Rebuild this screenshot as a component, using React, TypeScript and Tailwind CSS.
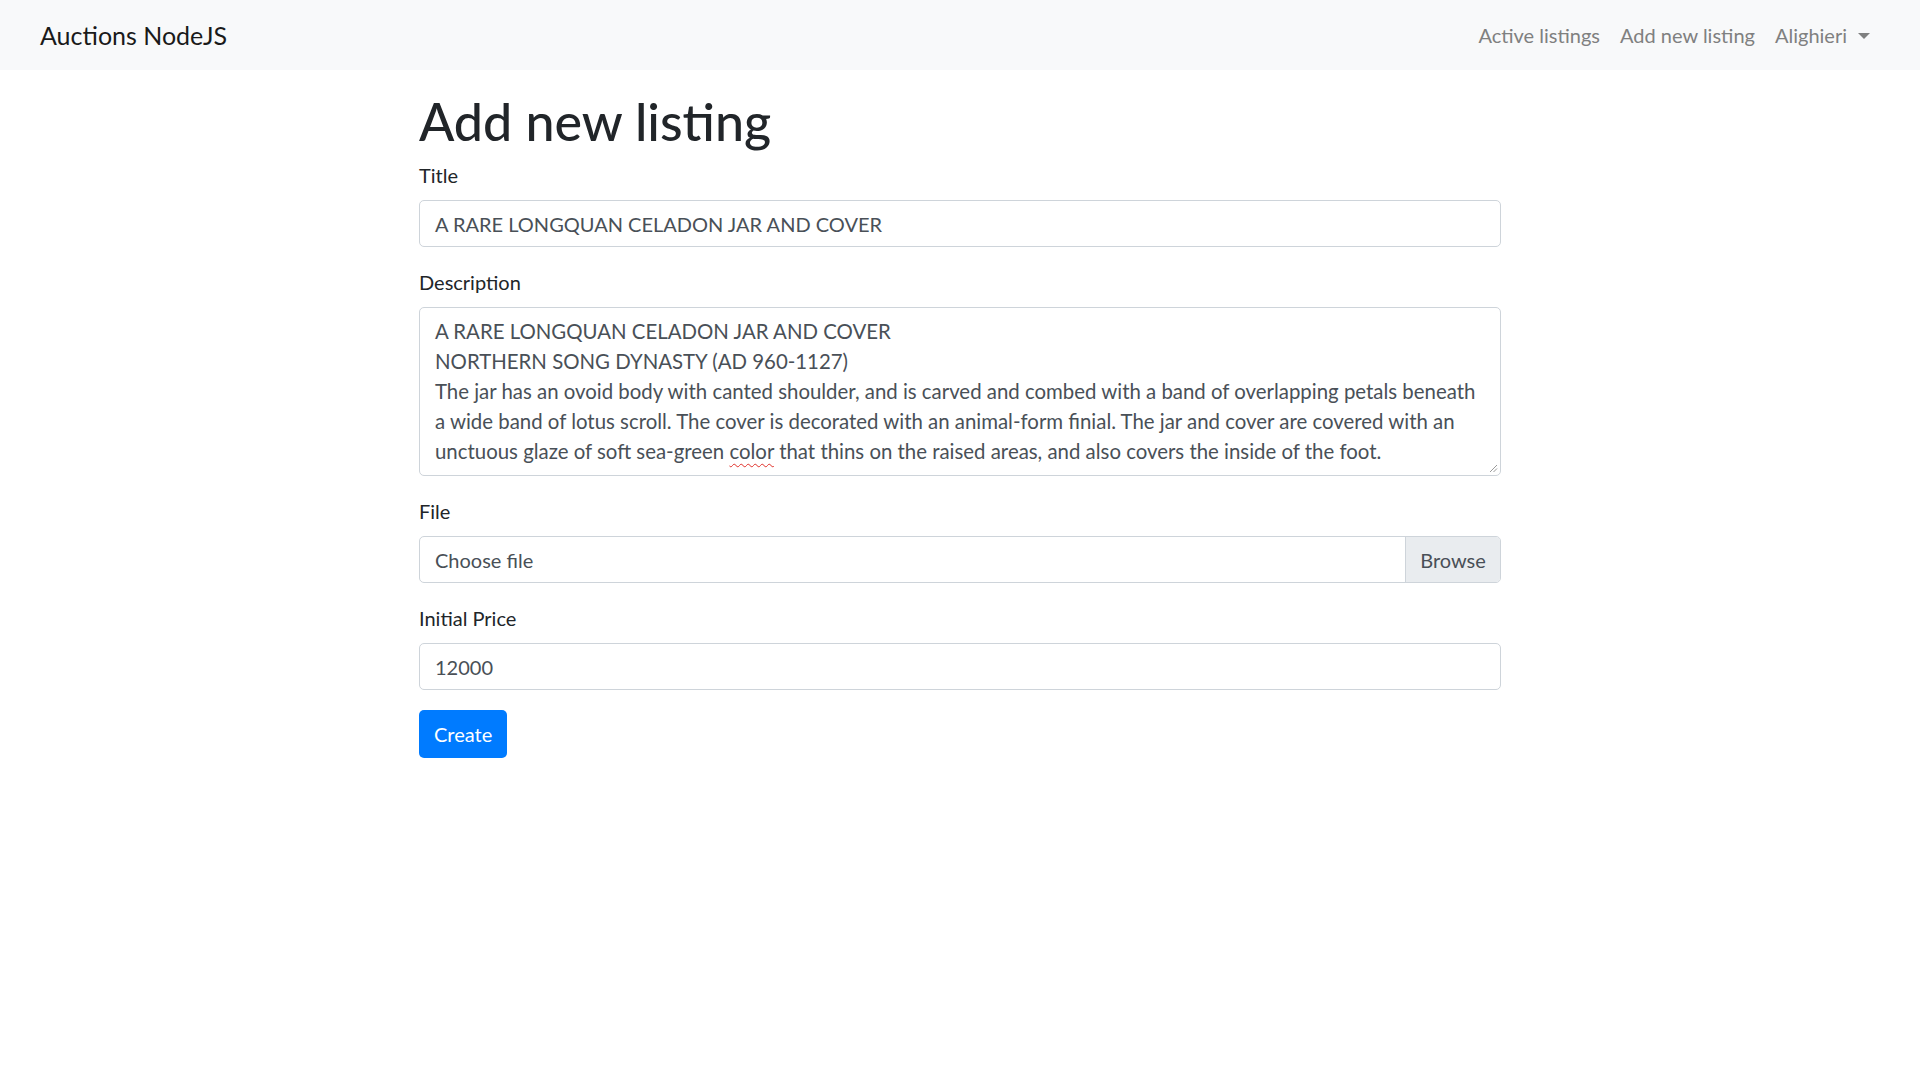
import React from "react";

const font = { fontFamily: "Lato, 'Noto Sans', sans-serif" };

const descLines: React.ReactNode[] = [
  "A RARE LONGQUAN CELADON JAR AND COVER",
  "NORTHERN SONG DYNASTY (AD 960-1127)",
  "The jar has an ovoid body with canted shoulder, and is carved and combed with a band of overlapping petals beneath",
  "a wide band of lotus scroll. The cover is decorated with an animal-form finial. The jar and cover are covered with an",
  <>
    unctuous glaze of soft sea-green{" "}
    <span className="underline decoration-wavy decoration-[#e0302a] decoration-1 underline-offset-[4px]">color</span>{" "}
    that thins on the raised areas, and also covers the inside of the foot.
  </>,
];

const Label = ({ children }: { children: React.ReactNode }) => (
  <label className="block mb-[10px] text-[20px] leading-[30px] text-[#212529]">{children}</label>
);

const Input = ({ value }: { value: string }) => (
  <div className="h-[47px] w-full rounded-[5px] border border-[#ced4da] bg-white px-[15px] flex items-center text-[20px] leading-[30px] text-[#495057]">
    {value}
  </div>
);

const App = () => {
  return (
    <div className="min-h-screen bg-white" style={font}>
      <nav className="h-[70px] bg-[#f8f9fa] flex items-center justify-between pl-[40px] pr-[50px]">
        <a className="text-[25px] leading-[37px] text-[#1a1a1a]">Auctions NodeJS</a>
        <ul className="flex items-center text-[20px] leading-[30px] text-[#7f8080]">
          <li className="px-[10px]">Active listings</li>
          <li className="px-[10px]">Add new listing</li>
          <li className="pl-[10px] flex items-center">
            Alighieri
            <span className="ml-[11px] mt-[1px] w-0 h-0 border-l-[6px] border-r-[6px] border-t-[6px] border-l-transparent border-r-transparent border-t-[#7f8080]" />
          </li>
        </ul>
      </nav>

      <main className="w-[1082px] mx-auto">
        <h1 className="mt-[20px] mb-[8px] text-[52px] leading-[62px] font-medium text-[#212529]">Add new listing</h1>

        <div className="mb-[20px]">
          <Label>Title</Label>
          <Input value="A RARE LONGQUAN CELADON JAR AND COVER" />
        </div>

        <div className="mb-[20px]">
          <Label>Description</Label>
          <div className="relative h-[169px] w-full rounded-[5px] border border-[#ced4da] bg-white px-[15px] pt-[8px] text-[20.4px] leading-[30px] text-[#495057]">
            {descLines.map((l, i) => (
              <div key={i} className="whitespace-nowrap">
                {l}
              </div>
            ))}
            <svg className="absolute right-[2px] bottom-[2px]" width="10" height="10" viewBox="0 0 10 10">
              <path d="M9 2 L2 9 M9 5.5 L5.5 9" stroke="#9a9a9a" strokeWidth="1" />
            </svg>
          </div>
        </div>

        <div className="mb-[20px]">
          <Label>File</Label>
          <div className="h-[47px] w-full rounded-[5px] border border-[#ced4da] bg-white flex text-[20px] leading-[30px] text-[#495057] overflow-hidden">
            <div className="flex-1 px-[15px] flex items-center">Choose file</div>
            <div className="w-[95px] bg-[#e9ecef] border-l border-[#ced4da] flex items-center justify-center">Browse</div>
          </div>
        </div>

        <div className="mb-[20px]">
          <Label>Initial Price</Label>
          <Input value="12000" />
        </div>

        <button className="h-[48px] px-[15px] rounded-[5px] bg-[#007bff] text-white text-[20px] leading-[30px]">
          Create
        </button>
      </main>
    </div>
  );
};

export default App;
